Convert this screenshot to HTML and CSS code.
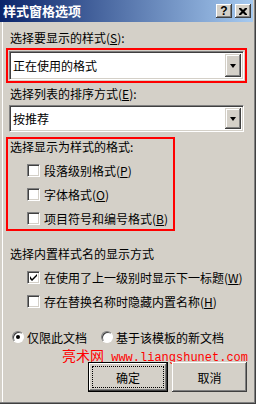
FILE: index.html
```html
<!DOCTYPE html>
<html lang="zh-CN">
<head>
  <meta charset="UTF-8">
  <meta name="viewport" content="width=device-width, initial-scale=1.0">
  <title>样式窗格选项</title>
  <link rel="stylesheet" href="styles.css">
</head>
<body>

  <div class="window">
    <!-- Title bar -->
    <div class="titlebar">
      <span class="title">样式窗格选项</span>
      <div class="caption-btns">
        <span class="cap-btn help">?</span>
        <span class="cap-btn close">
          <svg width="8" height="7" viewBox="0 0 8 7"><path d="M0 0h2l2 2 2-2h2v1l-2.5 2.5L8 6v1H6L4 5 2 7H0V6l2.5-2.5L0 1z" fill="#000"/></svg>
        </span>
      </div>
    </div>

    <div class="dialog">
      <div class="label l1">选择要显示的样式(<u>S</u>):</div>
      <div class="hl hl-combo">
        <div class="combo c1">
          <span class="combo-text">正在使用的格式</span>
          <span class="drop"><i class="arrow"></i></span>
        </div>
      </div>

      <div class="label l2">选择列表的排序方式(<u>E</u>):</div>
      <div class="combo c2">
        <span class="combo-text">按推荐</span>
        <span class="drop"><i class="arrow"></i></span>
      </div>

      <div class="hl hl-group">
        <div class="label group-label">选择显示为样式的格式:</div>
        <div class="check-row"><span class="checkbox"></span>段落级别格式(<u>P</u>)</div>
        <div class="check-row"><span class="checkbox"></span>字体格式(<u>O</u>)</div>
        <div class="check-row"><span class="checkbox"></span>项目符号和编号格式(<u>B</u>)</div>
      </div>

      <div class="label l4">选择内置样式名的显示方式</div>
      <div class="check-list">
        <div class="check-row">
          <span class="checkbox checked">
            <svg width="7" height="7" viewBox="0 0 7 7"><path d="M0 2v3l2 2 5-5V-0L2 5z" fill="#000"/></svg>
          </span>在使用了上一级别时显示下一标题(<u>W</u>)
        </div>
        <div class="check-row"><span class="checkbox"></span>存在替换名称时隐藏内置名称(<u>H</u>)</div>
      </div>

      <div class="radio-row">
        <label class="radio-item"><span class="radio selected"></span>仅限此文档</label>
        <label class="radio-item second"><span class="radio"></span>基于该模板的新文档</label>
      </div>

      <div class="watermark"><span class="wm-cn">亮术网</span> www.liangshunet.com</div>

      <div class="buttons">
        <button class="btn btn-default"><span class="focus">确定</span></button>
        <button class="btn btn-cancel">取消</button>
      </div>
    </div>
  </div>

</body>
</html>
```

FILE: styles.css
```css
body {
  margin: 0;
  font-family: "Noto Sans CJK SC", "DejaVu Sans", sans-serif;
  font-size: 12px;
  color: #000;
  background: #d4d0c8;
}
.window {
  width: 256px;
  height: 404px;
  box-sizing: border-box;
  background: #d4d0c8;
  box-shadow: inset -1px -1px 0 #404040, inset -2px -2px 0 #808080, inset 2px 0 0 #d4d0c8, inset 3px 0 0 #fff;
  overflow: hidden;
}
.titlebar {
  height: 22px;
  width: 253px;
  box-sizing: border-box;
  padding: 0 2px 0 3px;
  display: flex;
  align-items: center;
  background: linear-gradient(to right, #0a246a, #a6caf0);
}
.title {
  color: #fff;
  font-weight: bold;
  font-size: 13px;
  line-height: 14px;
}
.caption-btns {
  margin-left: auto;
  display: flex;
  gap: 3px;
}
.cap-btn {
  width: 16px;
  height: 14px;
  box-sizing: border-box;
  display: flex;
  align-items: center;
  justify-content: center;
  background: #d4d0c8;
  box-shadow: inset -1px -1px 0 #404040, inset 1px 1px 0 #fff, inset -2px -2px 0 #808080;
}
.help {
  font-family: "Liberation Sans", Arial, sans-serif;
  font-weight: bold;
  font-size: 12px;
  line-height: 12px;
}
.dialog {
  padding-left: 6px;
}
.label {
  line-height: 14px;
  padding-left: 4px;
  white-space: nowrap;
}
.l1 {
  margin-top: 9px;
}
.hl {
  border: 2px solid #f00;
  box-sizing: border-box;
}
.hl-combo {
  margin-top: 3px;
  width: 241px;
  height: 35px;
  padding: 1px;
}
.combo {
  display: flex;
  align-items: stretch;
  box-sizing: border-box;
  background: #fff;
  border-style: solid;
  border-width: 1px;
  border-color: #808080 #fff #fff #808080;
  box-shadow: inset 1px 1px 0 #404040, inset -1px -1px 0 #d4d0c8;
  padding: 2px;
}
.c1 {
  height: 29px;
}
.c2 {
  margin-top: 4px;
  margin-left: 3px;
  width: 235px;
  height: 27px;
}
.combo-text {
  flex: 1;
  display: flex;
  align-items: center;
  padding-left: 1px;
  white-space: nowrap;
}
.drop {
  width: 16px;
  display: flex;
  align-items: center;
  justify-content: center;
  background: #d4d0c8;
  box-shadow: inset -1px -1px 0 #404040, inset 1px 1px 0 #d4d0c8, inset -2px -2px 0 #808080, inset 2px 2px 0 #fff;
}
.arrow {
  width: 0;
  height: 0;
  border-left: 3.5px solid transparent;
  border-right: 3.5px solid transparent;
  border-top: 4px solid #000;
}
.l2 {
  margin-top: 4px;
}
.hl-group {
  margin-top: 5px;
  width: 169px;
  height: 94px;
}
.group-label {
  margin-top: 1px;
  margin-bottom: 4px;
  padding-left: 2px;
}
.check-row {
  height: 24px;
  display: flex;
  align-items: center;
  white-space: nowrap;
}
.hl-group .check-row {
  padding-left: 19px;
}
.check-list .check-row {
  padding-left: 21px;
}
.checkbox {
  width: 13px;
  height: 13px;
  box-sizing: border-box;
  margin-right: 4px;
  flex-shrink: 0;
  display: flex;
  align-items: center;
  justify-content: center;
  background: #fff;
  border-style: solid;
  border-width: 1px;
  border-color: #808080 #fff #fff #808080;
  box-shadow: inset 1px 1px 0 #404040, inset -1px -1px 0 #d4d0c8;
}
.l4 {
  margin-top: 16px;
}
.check-list {
  margin-top: 4px;
}
.radio-row {
  margin-top: 13px;
  height: 22px;
  display: flex;
  align-items: center;
  padding-left: 6px;
}
.radio-item {
  display: flex;
  align-items: center;
  white-space: nowrap;
}
.radio-item.second {
  margin-left: 14px;
}
.radio {
  width: 12px;
  height: 12px;
  box-sizing: border-box;
  margin-right: 3px;
  border-radius: 50%;
  background: #fff;
  border-style: solid;
  border-width: 1px;
  border-color: #808080 #fff #fff #808080;
  box-shadow: inset 1px 1px 0 #404040;
  display: flex;
  align-items: center;
  justify-content: center;
}
.radio.selected::after {
  content: "";
  width: 4px;
  height: 4px;
  border-radius: 50%;
  background: #000;
}
.watermark {
  margin-left: 56px;
  height: 14px;
  line-height: 14px;
  color: #f00;
  font-family: "Liberation Mono", "Courier New", monospace;
  font-size: 12px;
  white-space: nowrap;
}
.wm-cn {
  font-family: "Noto Sans CJK SC", sans-serif;
  font-size: 14px;
}
.buttons {
  display: flex;
  gap: 4px;
  margin-left: 82px;
  height: 30px;
}
.btn {
  font-family: "Noto Sans CJK SC", sans-serif;
  font-size: 12px;
  color: #000;
  background: #d4d0c8;
  border: none;
  padding: 0;
  height: 30px;
  box-sizing: border-box;
  cursor: pointer;
}
.btn-default {
  width: 80px;
  border: 1px solid #000;
  box-shadow: inset -1px -1px 0 #404040, inset 1px 1px 0 #fff, inset -2px -2px 0 #808080;
  padding: 3px;
  display: flex;
}
.focus {
  flex: 1;
  display: flex;
  align-items: center;
  justify-content: center;
  border: 1px dotted #000;
}
.btn-cancel {
  width: 75px;
  box-shadow: inset -1px -1px 0 #404040, inset 1px 1px 0 #fff, inset -2px -2px 0 #808080;
}
```
